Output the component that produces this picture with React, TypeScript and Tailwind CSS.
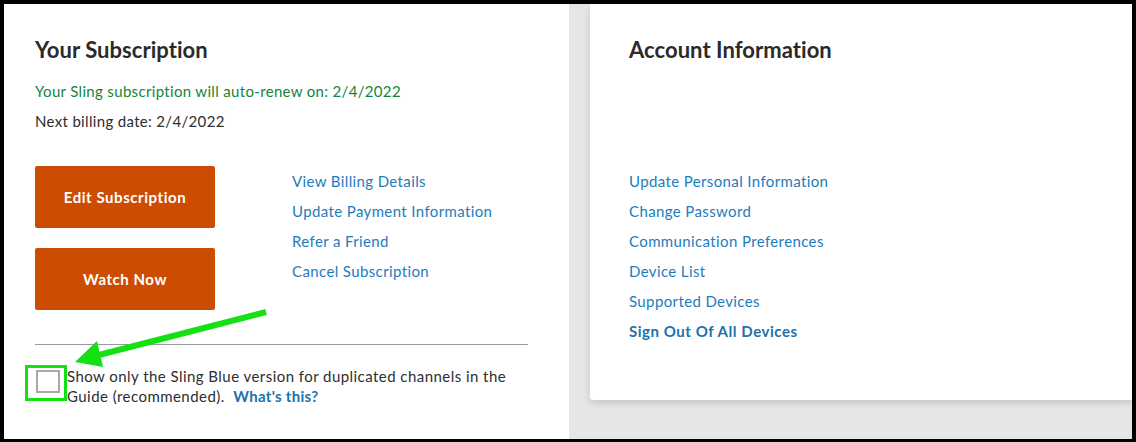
import React from "react";

const font = { fontFamily: "Lato, 'Open Sans', Arial, sans-serif" };

function LinkItem({ children, bold }: { children: React.ReactNode; bold?: boolean }) {
  return (
    <a
      href="#"
      className={
        bold
          ? "block h-[30px] leading-[20px] text-[15px] font-bold tracking-[0.55px] text-[#1b72ad]"
          : "block h-[30px] leading-[20px] text-[15px] tracking-[0.38px] text-[#1d7cbd]"
      }
    >
      {children}
    </a>
  );
}

export default function App() {
  return (
    <div
      className="relative w-[1136px] h-[442px] overflow-hidden bg-[#e6e6e6] border-l-4 border-t-4 border-r-[4px] border-b-[3px] border-black flex"
      style={font}
    >
      {/* Left panel */}
      <div className="w-[565px] h-full bg-white pl-[31px] pt-[31px] shrink-0">
        <h2 className="text-[22px] leading-[29px] font-bold tracking-[0.05px] text-[#2a2a2a]">Your Subscription</h2>
        <p className="mt-[17px] text-[15px] leading-[20px] tracking-[0.33px] text-[#13853b]">
          Your Sling subscription will auto-renew on: 2/4/2022
        </p>
        <p className="mt-[10px] text-[15px] leading-[20px] tracking-[0.33px] text-[#2e2e2e]">Next billing date: 2/4/2022</p>

        <div className="mt-[35px] flex">
          <div className="flex flex-col gap-[20px]">
            <button className="w-[180px] h-[62px] rounded-[2px] bg-[#cc4c02] text-white text-[15px] font-bold tracking-[0.55px]">
              Edit Subscription
            </button>
            <button className="w-[180px] h-[62px] rounded-[2px] bg-[#cc4c02] text-white text-[15px] font-bold tracking-[0.55px]">
              Watch Now
            </button>
          </div>
          <div className="ml-[77px] pt-[5px] flex flex-col">
            <LinkItem>View Billing Details</LinkItem>
            <LinkItem>Update Payment Information</LinkItem>
            <LinkItem>Refer a Friend</LinkItem>
            <LinkItem>Cancel Subscription</LinkItem>
          </div>
        </div>

        <div className="mt-[34px] w-[493px] h-px bg-[#9a9a9a]" />

        <div className="mt-[21px] flex items-start">
          <div className="mt-[4px] ml-[1px] w-[24px] h-[23px] border-2 border-[#a8a8a8] bg-white shrink-0" />
          <p className="ml-[7px] text-[15px] leading-[20px] tracking-[0.45px] text-[#2e2e2e] whitespace-nowrap">
            Show only the Sling Blue version for duplicated channels in the
            <br />
            Guide (recommended).{"\u00a0\u00a0"}
            <a href="#" className="font-bold tracking-[0.3px] text-[#1b72ad]">What's this?</a>
          </p>
        </div>
      </div>

      {/* Right area */}
      <div className="flex-1 pl-[21px]">
        <div className="h-[396px] bg-white rounded-bl-[3px] shadow-[0_3px_7px_rgba(0,0,0,0.14)] pl-[39px] pt-[31px]">
          <h2 className="text-[22px] leading-[29px] font-bold tracking-[0.05px] text-[#2a2a2a]">Account Information</h2>
          <div className="mt-[107px] flex flex-col">
            <LinkItem>Update Personal Information</LinkItem>
            <LinkItem>Change Password</LinkItem>
            <LinkItem>Communication Preferences</LinkItem>
            <LinkItem>Device List</LinkItem>
            <LinkItem>Supported Devices</LinkItem>
            <LinkItem bold>Sign Out Of All Devices</LinkItem>
          </div>
        </div>
      </div>

      {/* Annotation overlay */}
      <svg
        className="absolute left-[-4px] top-[-4px] pointer-events-none"
        width={1136}
        height={442}
        viewBox="0 0 1136 442"
      >
        <rect x={26.5} y={366.5} width={39} height={33} fill="none" stroke="#14e014" strokeWidth={3} />
        <line x1={266} y1={312} x2={95} y2={356} stroke="#14e014" strokeWidth={6} />
        <polygon points="75,362 97,341 103,367" fill="#14e014" />
      </svg>
    </div>
  );
}
